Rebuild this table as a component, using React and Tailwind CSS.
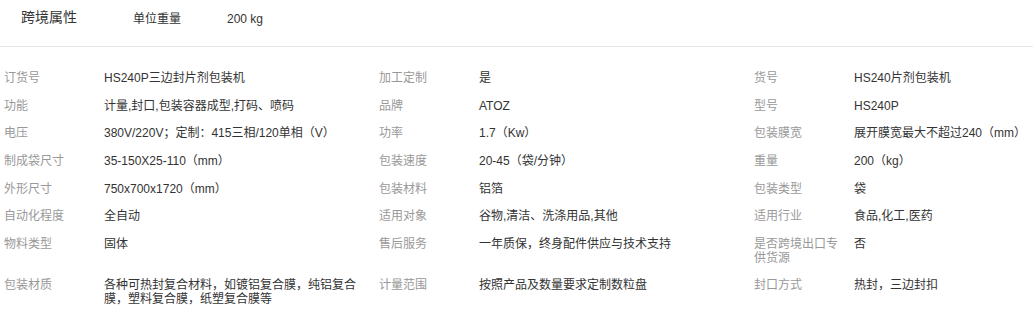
import React from 'react';

const rows = [
  [
    ['订货号', 'HS240P三边封片剂包装机'],
    ['加工定制', '是'],
    ['货号', 'HS240片剂包装机'],
  ],
  [
    ['功能', '计量,封口,包装容器成型,打码、喷码'],
    ['品牌', 'ATOZ'],
    ['型号', 'HS240P'],
  ],
  [
    ['电压', '380V/220V；定制：415三相/120单相（V）'],
    ['功率', '1.7（Kw）'],
    ['包装膜宽', '展开膜宽最大不超过240（mm）'],
  ],
  [
    ['制成袋尺寸', '35-150X25-110（mm）'],
    ['包装速度', '20-45（袋/分钟）'],
    ['重量', '200（kg）'],
  ],
  [
    ['外形尺寸', '750x700x1720（mm）'],
    ['包装材料', '铝箔'],
    ['包装类型', '袋'],
  ],
  [
    ['自动化程度', '全自动'],
    ['适用对象', '谷物,清洁、洗涤用品,其他'],
    ['适用行业', '食品,化工,医药'],
  ],
  [
    ['物料类型', '固体'],
    ['售后服务', '一年质保，终身配件供应与技术支持'],
    ['是否跨境出口专供货源', '否'],
  ],
  [
    ['包装材质', '各种可热封复合材料，如镀铝复合膜，纯铝复合膜，塑料复合膜，纸塑复合膜等'],
    ['计量范围', '按照产品及数量要求定制数粒盘'],
    ['封口方式', '热封，三边封扣'],
  ],
];

export default function App() {
  return (
    <div
      className="w-full h-[309px] overflow-hidden bg-white"
      style={{ fontFamily: '"Liberation Sans", "Noto Sans CJK SC", sans-serif' }}
    >
      <div className="flex items-start h-[47px] border-b border-[#e8e8e8]">
        <div className="pl-[21px] pt-[7px] w-[133px] text-[14px] leading-[20px] text-[#333]">跨境属性</div>
        <div className="pt-[9px] w-[94px] text-[12px] leading-[20px] text-[#333]">单位重量</div>
        <div className="pt-[9px] text-[12px] leading-[20px] text-[#333]">200 kg</div>
      </div>

      <div className="pt-[18px] pl-[4px] w-[1129px]">
        {rows.map((row, i) => (
          <div key={i} className="flex">
            {row.map(([label, value], j) => (
              <div key={j} className="flex w-[375px] shrink-0 text-[12px] leading-[13.67px] py-[7px]">
                <div className="w-[100px] shrink-0 pr-[10px] text-[#999]">{label}</div>
                <div className="w-[275px] shrink-0 pr-[15px] text-[#333]">{value}</div>
              </div>
            ))}
          </div>
        ))}
      </div>
    </div>
  );
}
